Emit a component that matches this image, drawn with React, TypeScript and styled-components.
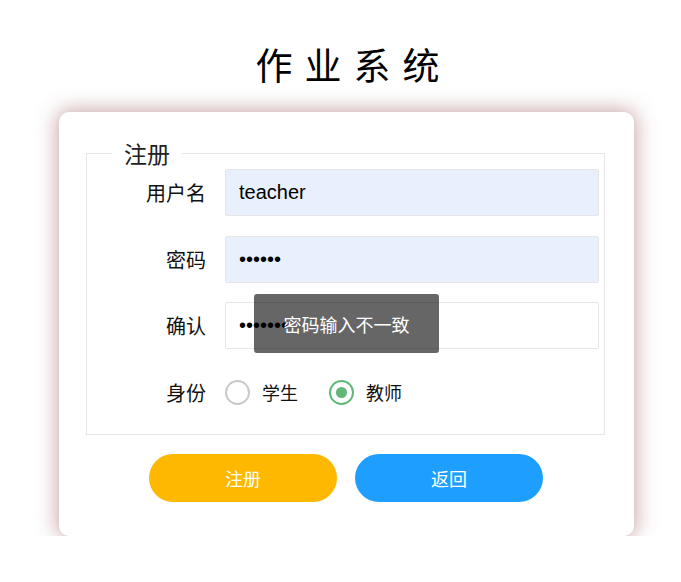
import styled, { createGlobalStyle } from 'styled-components';

const GlobalStyle = createGlobalStyle`
  html, body {
    margin: 0;
    padding: 0;
    background: #ffffff;
  }
  body {
    font-family: "Liberation Sans", "Noto Sans CJK SC", sans-serif;
    color: #000;
  }
`;

const Page = styled.div`
  width: 575px;
  margin-left: 59px;
  padding-top: 40px;
`;

const Title = styled.h1`
  margin: 0 0 24px;
  height: 48px;
  line-height: 48px;
  text-align: center;
  font-family: "Noto Sans CJK SC", sans-serif;
  font-size: 37px;
  font-weight: 400;
  letter-spacing: 12px;
  text-indent: 14px;
`;

const Card = styled.div`
  position: relative;
  box-sizing: border-box;
  height: 424px;
  padding: 25px 29px 0 27px;
  background: #fff;
  border-radius: 10px;
  box-shadow: 0 0 20px 2px rgba(150, 80, 80, 0.5);
`;

const FieldSet = styled.fieldset`
  margin: 0;
  padding: 0 5px 18px 0;
  border: 1px solid #e6e6e6;
  min-width: 0;
`;

const Legend = styled.legend`
  margin-left: 25px;
  padding: 0 12px;
  font-family: "Noto Sans CJK SC", sans-serif;
  font-size: 23px;
  line-height: 32px;
  color: #222;
`;

const Row = styled.div`
  display: flex;
  align-items: center;
  height: 47px;
  margin-bottom: 19.5px;

  &:last-child {
    margin-bottom: 0;
  }
`;

const Label = styled.label`
  width: 119px;
  margin-right: 19px;
  text-align: right;
  font-family: "Noto Sans CJK SC", sans-serif;
  font-size: 20px;
  color: #111;
`;

const Input = styled.input<{ $filled?: boolean }>`
  box-sizing: border-box;
  flex: 1;
  height: 47px;
  padding: 0 13px;
  border: 1px solid #e6e6e6;
  border-radius: 2px;
  background: ${({ $filled }) => ($filled ? '#e8f0fe' : '#fff')};
  font-family: "Liberation Sans", sans-serif;
  font-size: 20px;
  color: #000;
  outline: none;
`;

const RadioGroup = styled.div`
  display: flex;
  align-items: center;
  gap: 31px;
`;

const RadioItem = styled.span`
  display: flex;
  align-items: center;
  gap: 12px;
  font-family: "Noto Sans CJK SC", sans-serif;
  font-size: 18px;
  color: #111;
`;

const RadioCircle = styled.i<{ $checked?: boolean }>`
  box-sizing: border-box;
  display: flex;
  align-items: center;
  justify-content: center;
  width: 25px;
  height: 25px;
  border-radius: 50%;
  border: 2px solid ${({ $checked }) => ($checked ? '#5fb878' : '#c9c9c9')};

  &::after {
    content: '';
    display: ${({ $checked }) => ($checked ? 'block' : 'none')};
    width: 11px;
    height: 11px;
    border-radius: 50%;
    background: #5fb878;
  }
`;

const Buttons = styled.div`
  display: flex;
  justify-content: center;
  gap: 18px;
  margin-top: 19px;
  padding-left: 1px;
`;

const Button = styled.button<{ $color: string }>`
  width: 188px;
  height: 48px;
  border: none;
  border-radius: 24px;
  background: ${({ $color }) => $color};
  color: #fff;
  font-family: "Noto Sans CJK SC", sans-serif;
  font-size: 18px;
`;

const Toast = styled.div`
  position: absolute;
  left: 195px;
  top: 182px;
  width: 185px;
  height: 59px;
  display: flex;
  align-items: center;
  justify-content: center;
  border-radius: 3px;
  background: rgba(0, 0, 0, 0.6);
  color: #fff;
  font-family: "Noto Sans CJK SC", sans-serif;
  font-size: 18px;
`;

export default function App() {
  return (
    <>
      <GlobalStyle />
      <Page>
        <Title>作业系统</Title>
        <Card>
          <FieldSet>
            <Legend>注册</Legend>
            <Row>
              <Label>用户名</Label>
              <Input $filled defaultValue="teacher" />
            </Row>
            <Row>
              <Label>密码</Label>
              <Input $filled type="password" defaultValue="123456" />
            </Row>
            <Row>
              <Label>确认</Label>
              <Input type="password" defaultValue="1234567" />
            </Row>
            <Row>
              <Label>身份</Label>
              <RadioGroup>
                <RadioItem>
                  <RadioCircle />
                  学生
                </RadioItem>
                <RadioItem>
                  <RadioCircle $checked />
                  教师
                </RadioItem>
              </RadioGroup>
            </Row>
          </FieldSet>
          <Buttons>
            <Button $color="#ffb800">注册</Button>
            <Button $color="#1e9fff">返回</Button>
          </Buttons>
          <Toast>密码输入不一致</Toast>
        </Card>
      </Page>
    </>
  );
}
